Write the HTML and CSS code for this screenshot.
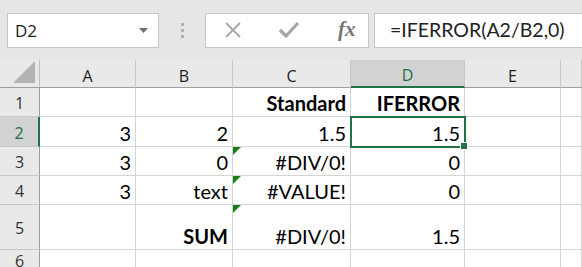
FILE: index.html
```html
<!DOCTYPE html>
<html lang="en">
<head>
  <meta charset="UTF-8" />
  <title>IFERROR</title>
  <link rel="stylesheet" href="styles.css">
</head>
<body>
  <div class="toolbar">
    <div class="name-box">
      <span>D2</span>
      <svg class="caret" width="9" height="5" viewBox="0 0 9 5"><path d="M0 0h9L4.5 5z" fill="#707070"/></svg>
    </div>
    <div class="grip"><i></i><i></i><i></i></div>
    <div class="fx-buttons">
      <svg width="18" height="18" viewBox="0 0 18 18"><path d="M2 2L16 16M16 2L2 16" stroke="#a6a6a6" stroke-width="1.8"/></svg>
      <svg width="22" height="18" viewBox="0 0 22 18"><path d="M2 9l6 6L20 2" stroke="#a6a6a6" stroke-width="3.2" fill="none"/></svg>
      <span class="fx">fx</span>
    </div>
    <div class="formula">=IFERROR(A2/B2,0)</div>
  </div>

  <div class="sheet">
    <div class="corner"><svg width="22" height="22" viewBox="0 0 22 22"><path d="M22 0V22H0z" fill="#b3b3b3"/></svg></div>
    <div class="col-head">A</div>
    <div class="col-head">B</div>
    <div class="col-head">C</div>
    <div class="col-head active">D</div>
    <div class="col-head">E</div>
    <div class="col-head"></div>

    <div class="row-head">1</div>
    <div class="cell"></div>
    <div class="cell"></div>
    <div class="cell bold">Standard</div>
    <div class="cell bold">IFERROR</div>
    <div class="cell"></div>
    <div class="cell"></div>

    <div class="row-head active">2</div>
    <div class="cell">3</div>
    <div class="cell">2</div>
    <div class="cell">1.5</div>
    <div class="cell selected">1.5<span class="handle"></span></div>
    <div class="cell"></div>
    <div class="cell"></div>

    <div class="row-head">3</div>
    <div class="cell">3</div>
    <div class="cell">0</div>
    <div class="cell flag">#DIV/0!</div>
    <div class="cell">0</div>
    <div class="cell"></div>
    <div class="cell"></div>

    <div class="row-head">4</div>
    <div class="cell">3</div>
    <div class="cell">text</div>
    <div class="cell flag">#VALUE!</div>
    <div class="cell">0</div>
    <div class="cell"></div>
    <div class="cell"></div>

    <div class="row-head">5</div>
    <div class="cell"></div>
    <div class="cell bold">SUM</div>
    <div class="cell flag">#DIV/0!</div>
    <div class="cell">1.5</div>
    <div class="cell"></div>
    <div class="cell"></div>

    <div class="row-head">6</div>
    <div class="cell"></div>
    <div class="cell"></div>
    <div class="cell"></div>
    <div class="cell"></div>
    <div class="cell"></div>
    <div class="cell"></div>
  </div>
</body>
</html>
```

FILE: styles.css
```css
body {
  margin: 0;
  width: 582px;
  height: 267px;
  overflow: hidden;
  background: #e6e6e6;
  font-family: "Segoe UI", "Open Sans", sans-serif;
}

.toolbar {
  display: flex;
  align-items: center;
  height: 60px;
  padding: 0 0 0 7px;
  box-sizing: border-box;
}

.name-box {
  display: flex;
  align-items: center;
  justify-content: space-between;
  width: 152px;
  height: 35px;
  box-sizing: border-box;
  background: #fff;
  border: 1px solid #c6c6c6;
  padding: 0 10px 0 7px;
  font-size: 17px;
  color: #222;
}

.caret { margin-top: 1px; }

.grip {
  display: flex;
  flex-direction: column;
  gap: 3px;
  width: 46px;
  align-items: center;
}

.grip i {
  width: 3px;
  height: 3px;
  background: #b0b0b0;
}

.fx-buttons {
  display: flex;
  align-items: center;
  width: 164px;
  height: 35px;
  box-sizing: border-box;
  background: #fff;
  border: 1px solid #c6c6c6;
  padding-left: 18px;
  gap: 36px;
}

.fx {
  font-family: "Liberation Serif", "DejaVu Serif", serif;
  font-style: italic;
  font-weight: bold;
  font-size: 21px;
  color: #757575;
  margin-left: 2px;
  margin-top: -2px;
}

.formula {
  flex: 1;
  height: 35px;
  margin-left: 5px;
  box-sizing: border-box;
  background: #fff;
  border: 1px solid #c6c6c6;
  border-right: none;
  padding-left: 15px;
  line-height: 32px;
  font-family: Lato, "Open Sans", sans-serif;
  font-size: 19.5px;
  color: #222;
}

.sheet {
  display: grid;
  grid-template-columns: 40px 96px 97px 118px 114px 96px 21px;
  grid-template-rows: 28px 29px 30px 29px 29px 45px 20px;
  background: #fff;
}

.corner,
.col-head,
.row-head {
  background: #e9e9e9;
  color: #222;
  font-size: 16px;
  display: flex;
  align-items: center;
  justify-content: center;
  box-sizing: border-box;
}

.corner {
  align-items: flex-end;
  justify-content: flex-end;
  padding: 0 4px 4px 0;
  border-right: 1px solid #c0c0c0;
  border-bottom: 1px solid #9e9e9e;
}

.col-head {
  border-right: 1px solid #c8c8c8;
  border-bottom: 1px solid #9e9e9e;
  padding-top: 4px;
}

.col-head.active {
  background: #d2d2d2;
  color: #1e6e42;
  border-bottom: 2px solid #217346;
}

.row-head {
  border-right: 1px solid #9e9e9e;
  border-bottom: 1px solid #c8c8c8;
  color: #333;
  padding-top: 2px;
}

.row-head.active {
  background: #d2d2d2;
  color: #1e6e42;
  border-right: 2px solid #217346;
}

.cell {
  position: relative;
  display: flex;
  align-items: flex-end;
  justify-content: flex-end;
  padding: 0 4px 1px 0;
  box-sizing: border-box;
  border-right: 1px solid #d4d4d4;
  border-bottom: 1px solid #d4d4d4;
  font-family: Lato, "Open Sans", sans-serif;
  font-size: 20px;
  color: #000;
}

.bold { font-weight: bold; }

.flag::before {
  content: "";
  position: absolute;
  left: 0;
  top: 0;
  border-top: 8px solid #1a7e1a;
  border-right: 8px solid transparent;
}

.selected {
  outline: 2px solid #217346;
  outline-offset: -1px;
  z-index: 1;
}

.handle {
  position: absolute;
  right: -4px;
  bottom: -4px;
  width: 6px;
  height: 6px;
  background: #217346;
  border: 1px solid #fff;
}
```
